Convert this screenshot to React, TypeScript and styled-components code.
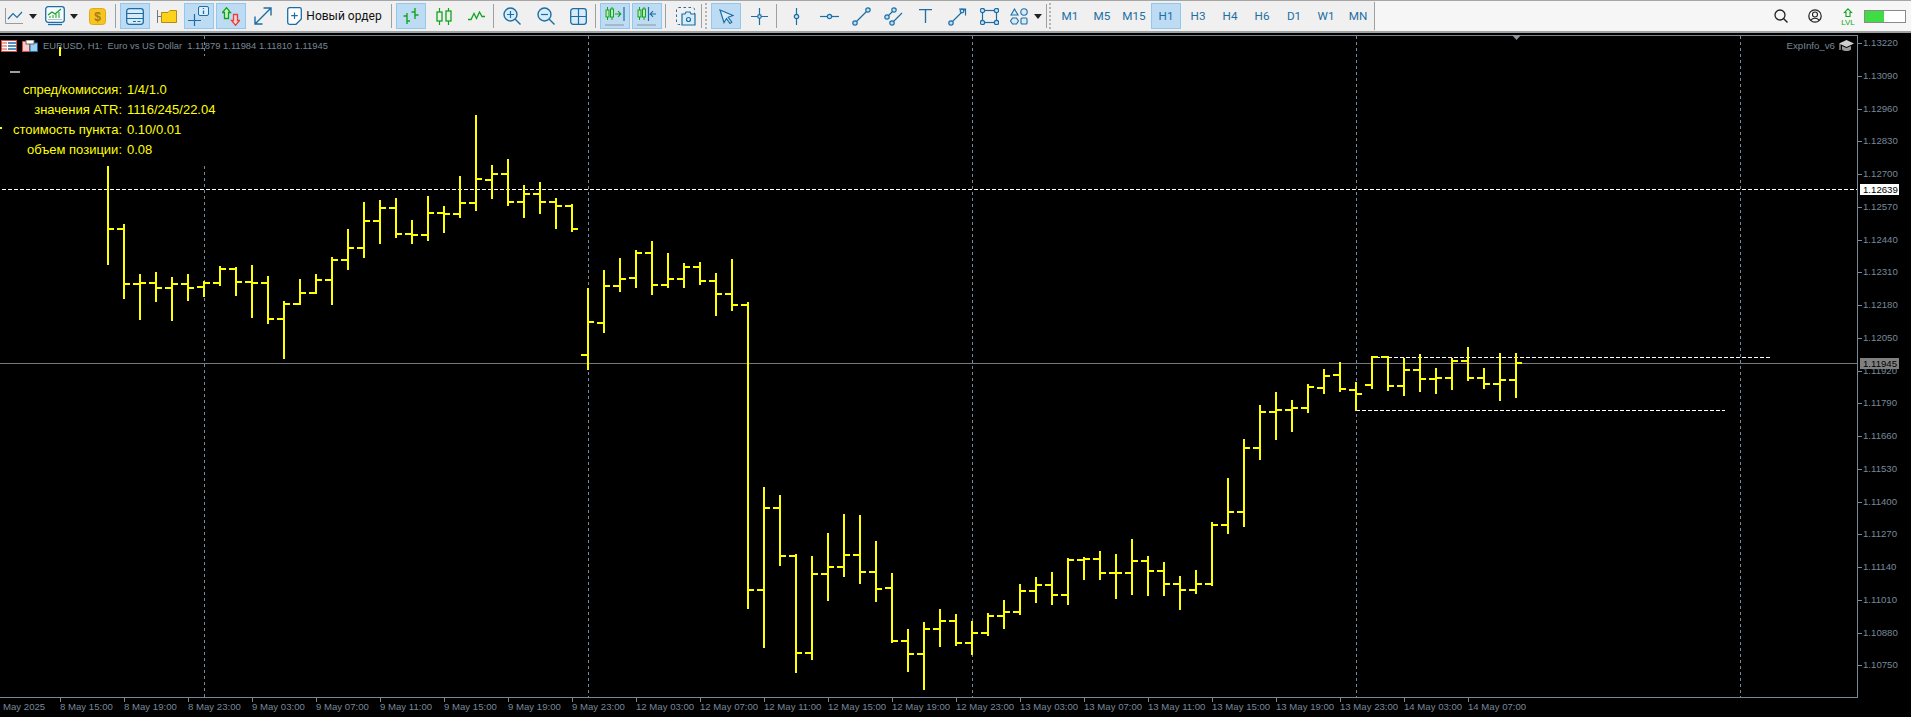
import React from "react";
import styled, { createGlobalStyle } from "styled-components";

const BLUE = "#1c6ea4";
const GREEN = "#12a51c";
const SLATE = "#778899";

const Global = createGlobalStyle`
  html, body { margin: 0; padding: 0; height: 100%; overflow: hidden; background: #000; }
  #root { height: 100%; }
`;

const Page = styled.div`
  display: flex;
  flex-direction: column;
  height: 100%;
  width: 100%;
  overflow: hidden;
  font-family: Roboto, "Noto Sans", "Liberation Sans", sans-serif;
`;

const Toolbar = styled.div`
  display: flex;
  align-items: center;
  height: 30px;
  flex: none;
  background: #f0f0f0;
  border-top: 1px solid #a6a6a6;
  border-bottom: 2px solid #a0a0a0;
`;

const Slot = styled.div<{ $w: number; $ml: number; $active?: boolean }>`
  display: flex;
  align-items: center;
  justify-content: center;
  flex: none;
  box-sizing: border-box;
  width: ${(p) => p.$w}px;
  height: 26px;
  margin-left: ${(p) => p.$ml}px;
  background: ${(p) => (p.$active ? "#bddcf4" : "transparent")};
  border: 1px solid ${(p) => (p.$active ? "#90c8f0" : "transparent")};
`;

const Sep = styled.div<{ $ml: number; $tall?: boolean }>`
  flex: none;
  width: 1px;
  height: ${(p) => (p.$tall ? 28 : 24)}px;
  margin-left: ${(p) => p.$ml}px;
  background: #a0a0a0;
`;

const Grip = styled.div<{ $ml: number }>`
  flex: none;
  width: 2px;
  height: 26px;
  margin-left: ${(p) => p.$ml}px;
  background: repeating-linear-gradient(to bottom, #b4b4b4 0 2px, transparent 2px 4px);
`;

const OrderLabel = styled.span`
  font-size: 12px;
  color: #111;
  white-space: nowrap;
`;

const Period = styled.span`
  font-size: 11.7px;
  color: ${BLUE};
  white-space: nowrap;
`;

const RightTools = styled.div`
  display: flex;
  align-items: center;
  flex: 1;
  align-self: stretch;
  background: #f6f6f6;
  justify-content: flex-end;
  padding-right: 5px;
`;

const IconCell = styled.div<{ $mr: number }>`
  display: flex;
  align-items: center;
  margin-right: ${(p) => p.$mr}px;
`;

const Battery = styled.div`
  width: 42px;
  height: 13px;
  box-sizing: border-box;
  border: 1px solid #8a8a8a;
  background: linear-gradient(to right, #3fdc45 0 48%, #ffffff 48% 100%);
`;

const Chart = styled.div`
  position: relative;
  flex: 1;
  background: #000;
  overflow: hidden;
`;

const Plot = styled.svg`
  position: absolute;
  inset: 0;
  display: block;
`;

const Legend = styled.div`
  position: absolute;
  left: 43px;
  top: 7px;
  font: 9.4px "Liberation Sans", sans-serif;
  line-height: 12px;
  color: ${SLATE};
  white-space: pre;
`;

const LegendIcons = styled.div`
  position: absolute;
  left: 1px;
  top: 7px;
  display: flex;
  gap: 5px;
`;

const ExpertTag = styled.div`
  position: absolute;
  right: 57px;
  top: 6px;
  display: flex;
  align-items: center;
  gap: 4px;
  font: 9.7px "Liberation Sans", sans-serif;
  color: ${SLATE};
`;

const InfoPanel = styled.div`
  position: absolute;
  left: 0;
  top: 46px;
  width: 240px;
  display: grid;
  grid-template-columns: 122px auto;
  column-gap: 5px;
  grid-auto-rows: 20px;
  align-items: center;
  font: 13px "Liberation Sans", sans-serif;
  color: #ffff00;
`;

const InfoKey = styled.span`
  text-align: right;
  white-space: nowrap;
`;

const InfoVal = styled.span`
  white-space: nowrap;
`;

const PriceLabel = styled.span`
  position: absolute;
  left: 1863px;
  font: 9.65px/12px "Liberation Sans", sans-serif;
  color: ${SLATE};
  transform: translateY(-6px);
`;

const PriceTag = styled.span<{ $bg: string }>`
  position: absolute;
  left: 1860px;
  width: 39px;
  height: 11px;
  box-sizing: border-box;
  padding-left: 3px;
  font: 9.65px/11px "Liberation Sans", sans-serif;
  color: #000;
  background: ${(p) => p.$bg};
  transform: translateY(-6px);
`;

const TimeLabel = styled.span`
  position: absolute;
  top: 668px;
  font: 9.6px/12px "Liberation Sans", sans-serif;
  color: ${SLATE};
  white-space: nowrap;
`;

/* ---------- icons ---------- */
type IP = { w: number; h: number; children: React.ReactNode };
const Ico = ({ w, h, children }: IP) => (
  <svg width={w} height={h} viewBox={`0 0 ${w} ${h}`} fill="none" style={{ display: "block", flex: "none" }}>
    {children}
  </svg>
);
const Caret = () => (
  <Ico w={8} h={5}>
    <path d="M0 0H8L4 5Z" fill="#222" />
  </Ico>
);
const Dot = ({ x, y, r = 2.2 }: { x: number; y: number; r?: number }) => (
  <circle cx={x} cy={y} r={r} fill="#bfe0f6" stroke={BLUE} strokeWidth={1.2} />
);

const icons: Record<string, React.ReactNode> = {
  line: (
    <Ico w={18} h={16}>
      <path d="M.5 0V15.5H18" stroke="#9a9a9a" />
      <path d="M3 11L8 5.5L12 9.5L17 4" stroke={BLUE} strokeWidth={1.2} />
    </Ico>
  ),
  monitor: (
    <Ico w={20} h={20}>
      <rect x=".7" y=".7" width="18.6" height="15.6" rx="2.5" stroke={BLUE} strokeWidth={1.3} fill="#f6fbff" />
      <path d="M3 18.5H17" stroke={BLUE} strokeWidth={1.3} />
      <path d="M3 13.5H17" stroke="#b8c2c8" />
      <path d="M3 9L7 6L10 8L16 3" stroke={GREEN} strokeWidth={1.3} />
      <path d="M5 10V12M8 9V12M11 8V12M14 6V12" stroke={GREEN} />
    </Ico>
  ),
  coin: (
    <Ico w={17} h={17}>
      <rect x=".5" y=".5" width="16" height="16" rx="3" fill="#f7c51f" stroke="#dfa91a" />
      <text x="8.5" y="13" fontSize="12" fontWeight="700" textAnchor="middle" fill="#a9791a" fontFamily="Liberation Sans">$</text>
    </Ico>
  ),
  windows: (
    <Ico w={18} h={17}>
      <rect x=".7" y=".7" width="16.6" height="15.6" rx="2.5" stroke={BLUE} strokeWidth={1.3} fill="#d7ebf9" />
      <path d="M1 5.5H17M1 10.5H17" stroke={BLUE} />
      <path d="M7 13.5H10M11.5 13.5H14.5" stroke={BLUE} strokeWidth={1.2} />
    </Ico>
  ),
  folder: (
    <Ico w={20} h={13}>
      <path d="M.5 0V13M.5 6.5H4" stroke="#777" />
      <path d="M4.5 2.5H11L13 .5H19.5V12.5H4.5Z" fill="#ffd21a" stroke="#b58a14" />
    </Ico>
  ),
  crossInfo: (
    <Ico w={22} h={20}>
      <path d="M0 14.5H13M6.5 8V20" stroke={BLUE} strokeWidth={1.2} />
      <rect x="10.5" y=".5" width="10" height="9" rx="1.5" stroke={BLUE} fill="#dceefb" />
      <path d="M15.5 2V3M15.5 4.5V8" stroke={BLUE} strokeWidth={1.3} />
    </Ico>
  ),
  arrows: (
    <Ico w={18} h={19}>
      <path d="M4.5 .7L8.5 5.5H6.5V11.5H2.5V5.5H.5Z" stroke={GREEN} strokeWidth={1.3} fill="#c8f0c8" />
      <path d="M13.5 18.3L17.5 13.5H15.5V7.5H11.5V13.5H9.5Z" stroke="#e5403c" strokeWidth={1.3} fill="#fbd0ce" />
    </Ico>
  ),
  diag: (
    <Ico w={18} h={18}>
      <path d="M1 17L17 1M9.5 1H17V8.5M1 9.5V17H8.5" stroke={BLUE} strokeWidth={1.4} />
    </Ico>
  ),
  doc: (
    <Ico w={15} h={18}>
      <path d="M2.5.7H12.5A1.8 1.8 0 0 1 14.3 2.5V12L9 17.3H2.5A1.8 1.8 0 0 1 .7 15.5V2.5A1.8 1.8 0 0 1 2.5.7Z" stroke={BLUE} strokeWidth={1.3} fill="#fff" />
      <path d="M7.5 5.5V12M4.2 8.7H10.8" stroke={BLUE} strokeWidth={1.2} />
    </Ico>
  ),
  bars: (
    <Ico w={16} h={16}>
      <path d="M4 5V16M4 8H0.5M4 13H7M12 0V11M12 4H8.5M12 7H15.5" stroke={GREEN} strokeWidth={1.4} />
    </Ico>
  ),
  candles: (
    <Ico w={16} h={17}>
      <path d="M3.5 0V17M12.5 0V17" stroke={GREEN} strokeWidth={1.2} />
      <rect x="1" y="4" width="5" height="9" fill="#f0f0f0" stroke={GREEN} strokeWidth={1.3} />
      <rect x="10" y="3" width="5" height="10" fill="#f0f0f0" stroke={GREEN} strokeWidth={1.3} />
    </Ico>
  ),
  zig: (
    <Ico w={17} h={10}>
      <path d="M0 8.5H3L6 2.5L8.5 7.5L11.5 1L14 5.5H17" stroke={GREEN} strokeWidth={1.3} />
    </Ico>
  ),
  zoomIn: (
    <Ico w={18} h={18}>
      <circle cx="7.5" cy="7.5" r="6.5" stroke={BLUE} strokeWidth={1.4} fill="#d7ebf9" />
      <path d="M12 12L17.5 17.5" stroke={BLUE} strokeWidth={1.4} />
      <path d="M4 7.5H11M7.5 4V11" stroke={BLUE} strokeWidth={1.2} />
    </Ico>
  ),
  zoomOut: (
    <Ico w={18} h={18}>
      <circle cx="7.5" cy="7.5" r="6.5" stroke={BLUE} strokeWidth={1.4} fill="#d7ebf9" />
      <path d="M12 12L17.5 17.5" stroke={BLUE} strokeWidth={1.4} />
      <path d="M4 7.5H11" stroke={BLUE} strokeWidth={1.2} />
    </Ico>
  ),
  grid: (
    <Ico w={17} h={17}>
      <rect x=".7" y=".7" width="15.6" height="15.6" rx="2.5" stroke={BLUE} strokeWidth={1.3} fill="#d7ebf9" />
      <path d="M8.5 1V16M1 8.5H16" stroke={BLUE} strokeWidth={1.2} />
    </Ico>
  ),
  scrollTo: (
    <Ico w={20} h={19}>
      <path d="M2.5 0V13M7 0V13" stroke={GREEN} />
      <rect x="1" y="3" width="3" height="7" fill="#bfe8c0" stroke={GREEN} />
      <rect x="5.5" y="2" width="3" height="8" fill="#bfe8c0" stroke={GREEN} />
      <path d="M10 7H15.5M13 4.2L15.8 7L13 9.8" stroke={GREEN} strokeWidth={1.1} />
      <path d="M19 0V14" stroke={BLUE} strokeWidth={1.2} />
      <path d="M0 18H19" stroke="#99a0a6" strokeWidth={1.2} />
    </Ico>
  ),
  shiftTo: (
    <Ico w={20} h={19}>
      <path d="M2.5 0V13M7 0V13" stroke={GREEN} />
      <rect x="1" y="3" width="3" height="7" fill="#bfe8c0" stroke={GREEN} />
      <rect x="5.5" y="2" width="3" height="8" fill="#bfe8c0" stroke={GREEN} />
      <path d="M19 7H13.5M16 4.2L13.2 7L16 9.8" stroke={BLUE} strokeWidth={1.1} />
      <path d="M11.5 0V14" stroke={BLUE} strokeWidth={1.2} />
      <path d="M0 18H19" stroke="#99a0a6" strokeWidth={1.2} />
    </Ico>
  ),
  camera: (
    <Ico w={20} h={19}>
      <rect x=".5" y=".5" width="18" height="17" rx="2" stroke={BLUE} strokeDasharray="2.5 2.5" />
      <path d="M6 7H9L10 5H14L15 7H19V18H6Z" fill="#d7ebf9" stroke={BLUE} strokeWidth={1.2} />
      <circle cx="12.5" cy="12.5" r="2" stroke={BLUE} strokeWidth={1.2} />
    </Ico>
  ),
  cursor: (
    <Ico w={15} h={15}>
      <path d="M1 1L14 6.5L9.2 8.3L12.8 13.2L11 14.5L7.5 9.5L5 13.5Z" stroke={BLUE} strokeWidth={1.2} fill="#d7ebf9" />
    </Ico>
  ),
  cross: (
    <Ico w={17} h={17}>
      <path d="M0 8.5H17M8.5 0V17" stroke={BLUE} strokeWidth={1.2} />
      <Dot x={8.5} y={8.5} r={1.8} />
    </Ico>
  ),
  vline: (
    <Ico w={7} h={17}>
      <path d="M3.5 0V17" stroke={BLUE} strokeWidth={1.2} />
      <Dot x={3.5} y={8.5} />
    </Ico>
  ),
  hline: (
    <Ico w={19} h={7}>
      <path d="M0 3.5H19" stroke={BLUE} strokeWidth={1.2} />
      <Dot x={9.5} y={3.5} />
    </Ico>
  ),
  trend: (
    <Ico w={19} h={19}>
      <path d="M3 16L16 3" stroke={BLUE} strokeWidth={1.2} />
      <Dot x={3} y={16} />
      <Dot x={16} y={3} />
    </Ico>
  ),
  channel: (
    <Ico w={19} h={19}>
      <path d="M3 10L10 3M8 16L18 6" stroke={BLUE} strokeWidth={1.2} />
      <Dot x={3} y={10} />
      <Dot x={10} y={3} />
      <Dot x={8} y={16} />
    </Ico>
  ),
  tee: (
    <Ico w={13} h={14}>
      <path d="M0 .7H13M6.5 .7V14" stroke={BLUE} strokeWidth={1.3} />
    </Ico>
  ),
  arrowLine: (
    <Ico w={19} h={19}>
      <path d="M3 16L17 2M11 2H17.5V8.5" stroke={BLUE} strokeWidth={1.2} />
      <Dot x={3} y={16} />
      <Dot x={14} y={4} r={1.8} />
    </Ico>
  ),
  rect: (
    <Ico w={19} h={17}>
      <rect x="2.5" y="2.5" width="14" height="12" stroke={BLUE} strokeWidth={1.2} />
      <Dot x={2.5} y={2.5} />
      <Dot x={16.5} y={2.5} />
      <Dot x={2.5} y={14.5} />
      <Dot x={16.5} y={14.5} />
    </Ico>
  ),
  shapes: (
    <Ico w={18} h={17}>
      <path d="M4.5 1L8 7H1Z" stroke={BLUE} strokeWidth={1.1} fill="#d7ebf9" />
      <circle cx="14" cy="4" r="3.2" stroke={BLUE} strokeWidth={1.1} fill="#d7ebf9" />
      <path d="M2.5 10H6.5L8.5 13L6.5 16H2.5L.5 13Z" stroke={BLUE} strokeWidth={1.1} fill="#d7ebf9" />
      <rect x="11" y="10" width="6" height="6" rx="1" stroke={BLUE} strokeWidth={1.1} fill="#d7ebf9" />
    </Ico>
  ),
  caret: <Caret />,
};

type Item =
  | { t: "i"; l: number; w: number; ic: string; a?: boolean }
  | { t: "o"; l: number; w: number }
  | { t: "s"; l: number; tall?: boolean }
  | { t: "g"; l: number }
  | { t: "p"; l: number; w: number; s: string; a?: boolean };

const periods = ["M1", "M5", "M15", "H1", "H3", "H4", "H6", "D1", "W1", "MN"];

const items: Item[] = [
  { t: "i", l: 0, w: 27, ic: "line" },
  { t: "i", l: 27, w: 11, ic: "caret" },
  { t: "i", l: 38, w: 33, ic: "monitor" },
  { t: "i", l: 69, w: 9, ic: "caret" },
  { t: "i", l: 84, w: 27, ic: "coin" },
  { t: "s", l: 115 },
  { t: "i", l: 120, w: 30, ic: "windows", a: true },
  { t: "i", l: 152, w: 30, ic: "folder" },
  { t: "i", l: 184, w: 30, ic: "crossInfo", a: true },
  { t: "i", l: 216, w: 30, ic: "arrows", a: true },
  { t: "i", l: 248, w: 30, ic: "diag" },
  { t: "i", l: 279, w: 30, ic: "doc" },
  { t: "o", l: 305, w: 78 },
  { t: "s", l: 391 },
  { t: "i", l: 396, w: 30, ic: "bars", a: true },
  { t: "i", l: 428, w: 32, ic: "candles" },
  { t: "i", l: 460, w: 32, ic: "zig" },
  { t: "s", l: 493 },
  { t: "i", l: 497, w: 30, ic: "zoomIn" },
  { t: "i", l: 530, w: 32, ic: "zoomOut" },
  { t: "i", l: 562, w: 32, ic: "grid" },
  { t: "s", l: 595 },
  { t: "i", l: 600, w: 30, ic: "scrollTo", a: true },
  { t: "i", l: 632, w: 30, ic: "shiftTo", a: true },
  { t: "s", l: 665 },
  { t: "i", l: 671, w: 30, ic: "camera" },
  { t: "s", l: 701 },
  { t: "g", l: 705 },
  { t: "i", l: 711, w: 30, ic: "cursor", a: true },
  { t: "i", l: 743, w: 32, ic: "cross" },
  { t: "s", l: 776 },
  { t: "i", l: 781, w: 30, ic: "vline" },
  { t: "i", l: 813, w: 32, ic: "hline" },
  { t: "i", l: 845, w: 32, ic: "trend" },
  { t: "i", l: 877, w: 32, ic: "channel" },
  { t: "i", l: 909, w: 32, ic: "tee" },
  { t: "i", l: 941, w: 32, ic: "arrowLine" },
  { t: "i", l: 973, w: 32, ic: "rect" },
  { t: "i", l: 1004, w: 30, ic: "shapes" },
  { t: "i", l: 1033, w: 9, ic: "caret" },
  { t: "s", l: 1046 },
  { t: "g", l: 1049 },
  ...periods.map((s, i): Item => ({ t: "p", l: 1055 + 32 * i, w: 30, s, a: s === "H1" })),
  { t: "s", l: 1374, tall: true },
];

const widthOf = (it: Item) => (it.t === "s" ? 1 : it.t === "g" ? 2 : it.w);

const ToolRow = () => {
  let cursor = 0;
  return (
    <>
      {items.map((it, i) => {
        const ml = it.l - cursor;
        cursor = it.l + widthOf(it);
        if (it.t === "s") return <Sep key={i} $ml={ml} $tall={it.tall} />;
        if (it.t === "g") return <Grip key={i} $ml={ml} />;
        if (it.t === "o")
          return (
            <Slot key={i} $w={it.w} $ml={ml}>
              <OrderLabel>Новый ордер</OrderLabel>
            </Slot>
          );
        if (it.t === "p")
          return (
            <Slot key={i} $w={it.w} $ml={ml} $active={it.a}>
              <Period>{it.s}</Period>
            </Slot>
          );
        return (
          <Slot key={i} $w={it.w} $ml={ml} $active={it.a}>
            {icons[it.ic]}
          </Slot>
        );
      })}
    </>
  );
};

/* ---------- chart data: hi, lo, open, close; bars 16px apart from x=108 ---------- */
const bars: number[][] = [
  [166, 265, -1, 229],
  [224, 299, 229, 284],
  [274, 320, 284, 283],
  [272, 302, 283, 288],
  [277, 321, 288, 284],
  [274, 301, 284, 288],
  [281, 297, 287, 283],
  [266, 286, 283, 269],
  [267, 296, 269, 282],
  [265, 318, 282, 283],
  [276, 324, 283, 319],
  [301, 359, 319, 304],
  [279, 305, 304, 293],
  [274, 294, 293, 280],
  [257, 305, 280, 260],
  [229, 270, 260, 248],
  [202, 258, 248, 221],
  [200, 244, 221, 208],
  [198, 238, 208, 234],
  [220, 244, 234, 235],
  [196, 241, 235, 213],
  [206, 233, 213, 214],
  [176, 218, 214, 203],
  [115, 211, 203, 179],
  [165, 199, 180, 174],
  [159, 206, 174, 202],
  [185, 218, 202, 194],
  [182, 214, 194, 202],
  [198, 229, 202, 206],
  [204, 232, 206, 229],
  [288, 370, 355, 322],
  [270, 333, 323, 286],
  [258, 292, 286, 279],
  [250, 288, 278, 253],
  [241, 295, 253, 285],
  [253, 288, 285, 279],
  [263, 288, 279, 267],
  [262, 285, 267, 281],
  [273, 316, 281, 294],
  [259, 311, 294, 305],
  [302, 609, 305, 590],
  [487, 648, 590, 508],
  [495, 566, 508, 556],
  [554, 673, 556, 653],
  [556, 660, 653, 574],
  [533, 601, 574, 567],
  [514, 577, 567, 555],
  [515, 584, 555, 572],
  [541, 602, 572, 589],
  [573, 643, 588, 641],
  [629, 672, 641, 654],
  [622, 690, 654, 629],
  [609, 647, 629, 621],
  [614, 646, 621, 643],
  [621, 655, 643, 633],
  [613, 636, 633, 616],
  [600, 629, 616, 612],
  [584, 615, 612, 591],
  [577, 603, 591, 585],
  [572, 605, 585, 595],
  [558, 605, 595, 560],
  [557, 580, 560, 559],
  [551, 580, 559, 573],
  [554, 599, 573, 573],
  [539, 595, 573, 561],
  [556, 596, 561, 571],
  [562, 596, 571, 584],
  [576, 610, 584, 590],
  [570, 594, 590, 584],
  [522, 586, 584, 525],
  [478, 534, 525, 512],
  [439, 527, 512, 448],
  [405, 460, 448, 412],
  [392, 440, 412, 410],
  [400, 432, 410, 408],
  [384, 413, 408, 387],
  [369, 394, 388, 376],
  [362, 392, 375, 389],
  [382, 411, 390, 394],
  [356, 389, 385, 357],
  [356, 391, 357, 386],
  [358, 396, 386, 370],
  [354, 392, 370, 379],
  [368, 394, 379, 378],
  [358, 390, 378, 361],
  [347, 381, 361, 378],
  [368, 389, 378, 384],
  [353, 401, 384, 380],
  [353, 398, 380, 363],
];

const prices = Array.from({ length: 20 }, (_, k) => ({
  text: (1.1322 - 0.0013 * k).toFixed(5),
  y: Math.round(43 + 32.75 * k),
}));

const timeLabels = [
  "8 May 15:00", "8 May 19:00", "8 May 23:00",
  "9 May 03:00", "9 May 07:00", "9 May 11:00", "9 May 15:00", "9 May 19:00", "9 May 23:00",
  "12 May 03:00", "12 May 07:00", "12 May 11:00", "12 May 15:00", "12 May 19:00", "12 May 23:00",
  "13 May 03:00", "13 May 07:00", "13 May 11:00", "13 May 15:00", "13 May 19:00", "13 May 23:00",
  "14 May 03:00", "14 May 07:00",
];

const info = [
  ["спред/комиссия:", "1/4/1.0"],
  ["значения ATR:", "1116/245/22.04"],
  ["стоимость пункта:", "0.10/0.01"],
  ["объем позиции:", "0.08"],
];

const PlotLayer = () => (
  <Plot width={1911} height={684} viewBox="0 33 1911 684" shapeRendering="crispEdges">
    {/* frame */}
    <path d="M0 35.5H1857.5V697.5H0" stroke={SLATE} fill="none" />
    {/* time grid */}
    {[588, 972, 1356, 1740].map((x) => (
      <path key={x} d={`M${x}.5 36V697`} stroke={SLATE} strokeDasharray="3 3" />
    ))}
    <path d="M204.5 36V56M204.5 166V697" stroke={SLATE} strokeDasharray="3 3" />
    {/* ticks */}
    {prices.map((p) => (
      <path key={p.y} d={`M1858 ${p.y}.5H1862`} stroke={SLATE} />
    ))}
    {timeLabels.map((_, i) => (
      <path key={i} d={`M${60 + 64 * i}.5 698V702`} stroke={SLATE} />
    ))}
    {/* price levels */}
    <path d="M2 189.5H1857" stroke="#fff" strokeDasharray="4 2" />
    <path d="M1376 357.5H1772" stroke="#fff" strokeDasharray="4 2" />
    <path d="M1356 410.5H1725" stroke="#fff" strokeDasharray="4 2" />
    <path d="M0 363.5H1857" stroke="#787878" />
    {/* bars */}
    <g fill="#ffff00">
      {bars.map(([hi, lo, o, c], i) => {
        const x = 108 + 16 * i;
        return (
          <g key={x}>
            <rect x={x - 1} y={hi} width={2} height={lo - hi} />
            {o > 0 && <rect x={x - 7} y={o - 1} width={6} height={2} />}
            <rect x={x + 1} y={c - 1} width={5} height={2} />
          </g>
        );
      })}
      <rect x={59} y={47} width={2} height={9} />
      <rect x={0} y={127} width={2} height={2} />
    </g>
    <rect x={10} y={71} width={10} height={2} fill="#a0a0a0" />
    <path d="M1512 35H1521L1516.5 40Z" fill="#8b95a0" shapeRendering="auto" />
  </Plot>
);

const App = () => (
  <Page>
    <Global />
    <Toolbar>
      <ToolRow />
      <RightTools>
        <IconCell $mr={20}>
          <Ico w={14} h={14}>
            <circle cx="6" cy="6" r="5" stroke="#222" strokeWidth={1.3} />
            <path d="M9.5 9.5L13.5 13.5" stroke="#222" strokeWidth={1.4} />
          </Ico>
        </IconCell>
        <IconCell $mr={19}>
          <Ico w={14} h={14}>
            <circle cx="7" cy="7" r="6.2" stroke="#222" strokeWidth={1.2} />
            <circle cx="7" cy="5.5" r="2.5" stroke="#222" strokeWidth={1.1} />
            <path d="M3 11.5C4 8.5 10 8.5 11 11.5" stroke="#222" strokeWidth={1.1} />
          </Ico>
        </IconCell>
        <IconCell $mr={9}>
          <Ico w={14} h={17}>
            <path d="M7 .8L10.5 4.5H9V8.5H5V4.5H3.5Z" stroke={GREEN} strokeWidth={1.1} />
            <text x="7" y="16.5" fontSize="8" textAnchor="middle" fill={GREEN} fontFamily="Liberation Sans">LVL</text>
          </Ico>
        </IconCell>
        <Battery />
      </RightTools>
    </Toolbar>
    <Chart>
      <PlotLayer />
      <LegendIcons>
        <Ico w={16} h={12}>
          <rect x=".5" y=".5" width="15" height="11" fill="#fff" stroke="#e0483c" />
          <path d="M1 3H6M1 6H6M1 9H6" stroke="#e0483c" />
          <path d="M7 3H15M7 6H15M7 9H15" stroke="#1c6ea4" strokeWidth={1.4} />
        </Ico>
        <Ico w={16} h={12}>
          <rect x=".5" y="1.5" width="7" height="10" fill="#f8cfcb" stroke="#e0483c" />
          <rect x="8" y="3" width="7.5" height="8.5" fill="#9fd0f2" stroke="#1c6ea4" />
          <rect x="4" y="0" width="8" height="4" fill="#fff" stroke="#666" />
        </Ico>
      </LegendIcons>
      <Legend>{"EURUSD, H1:  Euro vs US Dollar  1.11879 1.11984 1.11810 1.11945"}</Legend>
      <ExpertTag>
        ExpInfo_v6
        <Ico w={15} h={13}>
          <path d="M7.5 1L15 4.5L7.5 8L0 4.5Z" fill="#cfcfcf" />
          <path d="M3 7V10.5C5 12.5 10 12.5 12 10.5V7L7.5 9Z" fill="#9a9a9a" />
          <path d="M1 5V11" stroke="#cfcfcf" />
        </Ico>
      </ExpertTag>
      <InfoPanel>
        {info.map(([k, v]) => (
          <React.Fragment key={k}>
            <InfoKey>{k}</InfoKey>
            <InfoVal>{v}</InfoVal>
          </React.Fragment>
        ))}
      </InfoPanel>
      {prices.map((p) => (
        <PriceLabel key={p.text} style={{ top: p.y - 33 }}>
          {p.text}
        </PriceLabel>
      ))}
      <PriceTag $bg="#ffffff" style={{ top: 157 }}>1.12639</PriceTag>
      <PriceTag $bg="#808080" style={{ top: 331 }}>1.11945</PriceTag>
      <TimeLabel style={{ left: 3 }}>May 2025</TimeLabel>
      {timeLabels.map((t, i) => (
        <TimeLabel key={t} style={{ left: 60 + 64 * i }}>
          {t}
        </TimeLabel>
      ))}
    </Chart>
  </Page>
);

export default App;
